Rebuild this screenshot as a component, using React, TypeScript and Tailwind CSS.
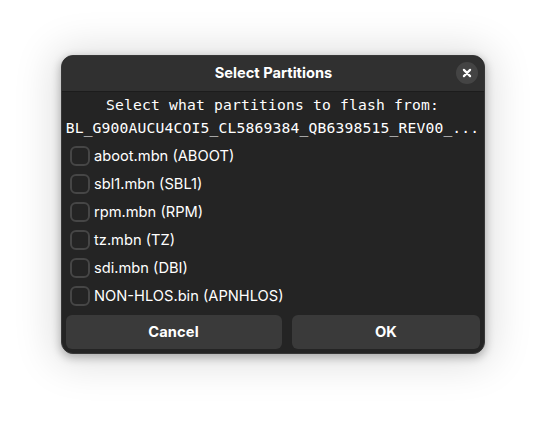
const partitions: string[] = [
  "aboot.mbn (ABOOT)",
  "sbl1.mbn (SBL1)",
  "rpm.mbn (RPM)",
  "tz.mbn (TZ)",
  "sdi.mbn (DBI)",
  "NON-HLOS.bin (APNHLOS)",
];

function TitleBar() {
  return (
    <header className="grid h-[36px] grid-cols-[1fr_auto_1fr] items-center border-b border-[#1c1c1c] bg-[#303030] px-[6px] pb-[1px]">
      <span />
      <h1 className="pl-[1px] text-[14.667px] leading-[20px] font-bold">Select Partitions</h1>
      <button
        aria-label="Close"
        className="flex h-[22px] w-[22px] items-center justify-center justify-self-end rounded-full bg-[#444444]"
      >
        <svg width="10" height="10" viewBox="0 0 10 10" fill="none" stroke="white" strokeWidth="2.2">
          <path d="M1.9 1.9 8.1 8.1M8.1 1.9 1.9 8.1" strokeLinecap="round" />
        </svg>
      </button>
    </header>
  );
}

function PartitionRow({ label }: { label: string }) {
  return (
    <label className="flex h-7 items-center gap-1 text-[14.667px]">
      <span className="h-5 w-5 rounded-[6px] border-2 border-[#464646]" />
      <span className="whitespace-nowrap">{label}</span>
    </label>
  );
}

export default function App() {
  return (
    <main className="h-[421px] w-[546px] overflow-hidden bg-white pl-[61px] pt-[55px] font-['Inter',sans-serif] text-white">
      <section className="h-[299px] w-[424px] overflow-hidden rounded-[12px] border border-[#373737] bg-[#242424] shadow-[0_3px_9px_1px_rgba(0,0,0,0.25),0_2px_40px_8px_rgba(0,0,0,0.13)]">
        <TitleBar />
        <div className="whitespace-pre pt-[1px] pr-[1px] text-center font-['DejaVu_Sans_Mono',monospace] text-[14.667px] leading-[23px] tracking-[0.17px]">
          <p>Select what partitions to flash from:</p>
          <p>BL_G900AUCU4COI5_CL5869384_QB6398515_REV00_...</p>
        </div>
        <div className="mt-[3px] pl-2">
          {partitions.map((label) => (
            <PartitionRow key={label} label={label} />
          ))}
        </div>
        <footer className="mt-[5px] flex gap-[10px] pl-1 text-[14.667px] font-bold">
          <button className="h-[34px] w-[216px] rounded-[6px] bg-[#3a3a3a] pr-[1px] tracking-[0.1px]">Cancel</button>
          <button className="h-[34px] w-[188px] rounded-[6px] bg-[#3a3a3a]">OK</button>
        </footer>
      </section>
    </main>
  );
}
